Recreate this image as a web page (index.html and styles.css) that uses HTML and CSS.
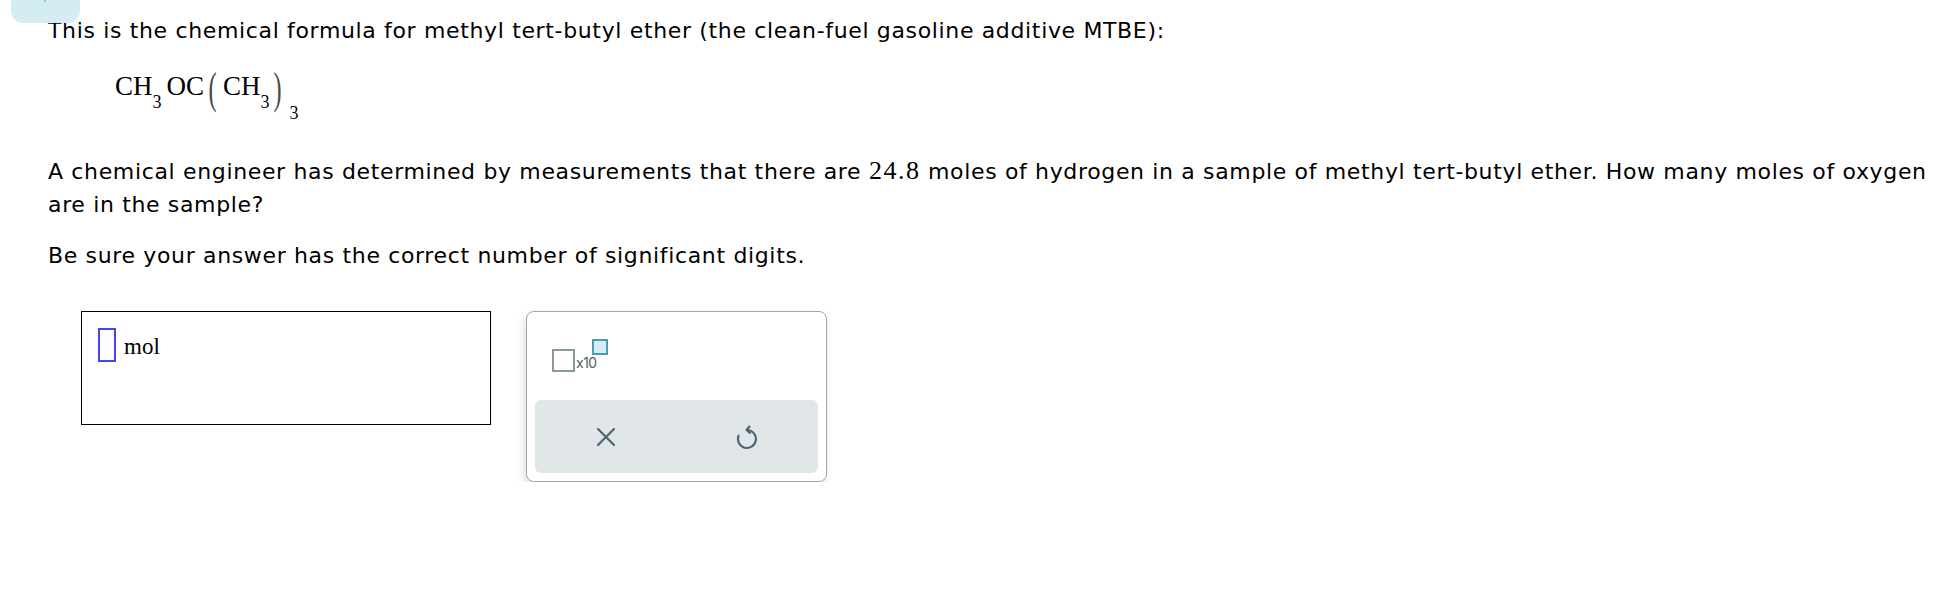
FILE: index.html
```html
<!DOCTYPE html>
<html lang="en">
<head>
<meta charset="utf-8">
<title>MTBE question</title>
<link rel="stylesheet" href="styles.css">
</head>
<body>
<div class="tab"><span class="tab-mark"></span></div>
<main class="content">
  <p class="q first">This is the chemical formula for methyl tert-butyl ether (the clean-fuel gasoline additive MTBE):</p>
  <div class="formula"><span class="el">CH</span><span class="sub">3</span><span class="el gap">OC</span><span class="paren open">(</span><span class="el">CH</span><span class="sub">3</span><span class="paren close">)</span><span class="sub outer">3</span></div>
  <p class="q second">A chemical engineer has determined by measurements that there are <span class="num">24.8</span> moles of hydrogen in a sample of methyl tert-butyl ether. How many moles of oxygen are in the sample?</p>
  <p class="q third">Be sure your answer has the correct number of significant digits.</p>
  <div class="answer-row">
    <div class="answer-box">
      <span class="cursor"></span><span class="unit">mol</span>
    </div>
    <div class="panel">
      <div class="sci">
        <span class="sci-base"></span><span class="sci-x10">x10</span><span class="sci-exp"></span>
      </div>
      <div class="actions">
        <button class="action" aria-label="Clear">
          <svg width="20" height="20" viewBox="0 0 20 20"><path d="M2 2 L18 18 M18 2 L2 18" stroke="#4d6571" stroke-width="2.2" stroke-linecap="round" fill="none"/></svg>
        </button>
        <button class="action" aria-label="Undo">
          <svg width="24" height="28" viewBox="0 0 24 28"><path d="M3.6 12.6 A9 9 0 1 0 12 7" stroke="#4d6571" stroke-width="2.1" stroke-linecap="round" fill="none"/><path d="M14.5 3.5 L11.5 7 L14.8 10" stroke="#4d6571" stroke-width="2.1" stroke-linecap="round" stroke-linejoin="round" fill="none"/></svg>
        </button>
      </div>
    </div>
  </div>
</main>
</body>
</html>
```
FILE: styles.css
```css
html, body {
  margin: 0;
  padding: 0;
  background: #fff;
}
body {
  font-family: "DejaVu Sans", Verdana, sans-serif;
  font-size: 22px;
  line-height: 33px;
  letter-spacing: 0.65px;
  color: #000;
  position: relative;
}
.tab {
  position: absolute;
  left: 11px;
  top: 0;
  width: 69px;
  height: 23px;
  background: #d4ecf3;
  border-radius: 0 0 12px 12px;
}
.tab-mark {
  position: absolute;
  left: 33px;
  top: 0;
  width: 2px;
  height: 2px;
  background: #8cc8da;
}
.content {
  padding: 0 8px 0 48px;
}
.q {
  margin: 0;
}
.q.first {
  padding-top: 14px;
}
.q.second {
  margin-top: 48px;
}
.q.third {
  margin-top: 18px;
}
.formula {
  font-family: "Liberation Serif", "Times New Roman", serif;
  font-size: 27px;
  line-height: 40px;
  letter-spacing: 0;
  height: 40px;
  margin-top: 19px;
  padding-left: 67px;
  white-space: nowrap;
}
.formula .sub {
  font-size: 18px;
  line-height: 18px;
  vertical-align: -13px;
}
.formula .sub.outer {
  vertical-align: -24px;
  margin-left: 4px;
}
.formula .gap {
  margin-left: 5px;
}
.formula .paren {
  display: inline-block;
  color: #4a4a4a;
  font-size: 27px;
  line-height: 27px;
  transform: translateY(2px) scale(0.9, 1.65);
  transform-origin: 50% 50%;
}
.formula .paren.open {
  margin: 0 6px 0 4px;
}
.formula .paren.close {
  margin: 0 4px 0 3px;
}
.num {
  font-family: "Liberation Serif", "Times New Roman", serif;
  font-size: 26px;
  letter-spacing: 1.5px;
}
.answer-row {
  display: flex;
  align-items: flex-start;
  gap: 35px;
  margin: 39px 0 0 33px;
  letter-spacing: 0;
}
.answer-box {
  box-sizing: border-box;
  width: 410px;
  height: 114px;
  border: 1px solid #000;
  padding: 16px 0 0 16px;
  display: flex;
  align-items: flex-start;
}
.cursor {
  box-sizing: border-box;
  width: 18px;
  height: 34px;
  border: 2px solid #4545f6;
}
.unit {
  font-family: "Liberation Serif", "Times New Roman", serif;
  font-size: 23px;
  line-height: 34px;
  margin: 2px 0 0 8px;
}
.panel {
  box-sizing: border-box;
  width: 301px;
  height: 171px;
  border: 1px solid #9aa9b0;
  border-radius: 8px;
  padding: 8px;
  display: flex;
  flex-direction: column;
  box-shadow: -2px 4px 8px rgba(60, 80, 90, 0.18);
  background: #fff;
}
.sci {
  display: flex;
  align-items: flex-start;
  margin: 19px 0 0 17px;
}
.sci-base {
  box-sizing: border-box;
  width: 23px;
  height: 23px;
  margin-top: 10px;
  border: 2.5px solid #8a999f;
}
.sci-x10 {
  font-family: Inter, "Open Sans", sans-serif;
  font-size: 14px;
  line-height: 14px;
  color: #4f5f66;
  margin: 17px 0 0 1px;
  letter-spacing: -0.5px;
}
.sci-exp {
  box-sizing: border-box;
  width: 16px;
  height: 16px;
  margin-left: -5px;
  border: 2px solid #4d9bb6;
  background: #d3ecf4;
}
.actions {
  margin-top: auto;
  height: 73px;
  background: #e1e6e9;
  border-radius: 6px;
  display: flex;
}
.action {
  flex: 1;
  border: none;
  background: transparent;
  padding: 0;
  display: flex;
  align-items: center;
  justify-content: center;
  cursor: pointer;
}
.action svg {
  display: block;
}
```
